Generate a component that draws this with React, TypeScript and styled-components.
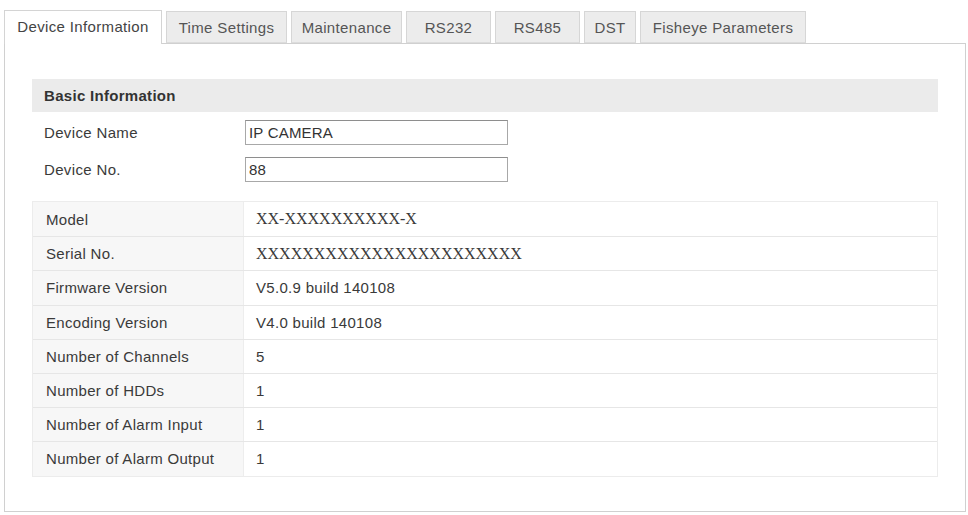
import React from "react";
import styled, { createGlobalStyle } from "styled-components";

const GlobalStyle = createGlobalStyle`
  html, body { margin: 0; padding: 0; background: #ffffff; }
  body { font-family: "Liberation Sans", Arial, sans-serif; color: #333; }
`;

const Page = styled.div`
  width: 968px;
  height: 515px;
  box-sizing: border-box;
  padding: 10px 3px 3px 4px;
  display: flex;
  flex-direction: column;
`;

const TabBar = styled.div`
  display: flex;
  align-items: flex-end;
  gap: 4px;
  height: 33px;
  position: relative;
  z-index: 1;
`;

const Tab = styled.div<{ $active?: boolean; $w: number }>`
  box-sizing: border-box;
  width: ${(p) => p.$w}px;
  height: ${(p) => (p.$active ? 34 : 32)}px;
  margin-bottom: ${(p) => (p.$active ? -1 : 0)}px;
  border: 1px solid ${(p) => (p.$active ? "#d4d4d4" : "#d6d6d6")};
  border-bottom: ${(p) => (p.$active ? "none" : "1px solid #dcdcdc")};
  background: ${(p) => (p.$active ? "#ffffff" : "#ececec")};
  color: ${(p) => (p.$active ? "#444" : "#555")};
  font-size: 15px;
  letter-spacing: 0.35px;
  display: flex;
  align-items: center;
  justify-content: center;
  padding-bottom: ${(p) => (p.$active ? 2 : 0)}px;
  white-space: nowrap;
`;

const Panel = styled.div`
  box-sizing: border-box;
  width: 962px;
  height: 469px;
  border: 1px solid #d0d0d0;
  padding: 35px 27px 0 27px;
  display: flex;
  flex-direction: column;
`;

const SectionHeader = styled.div`
  height: 33px;
  margin-bottom: 2px;
  background: #ebebeb;
  display: flex;
  align-items: center;
  padding-left: 12px;
  font-weight: bold;
  font-size: 15px;
  letter-spacing: 0.3px;
  color: #333;
`;

const FormRow = styled.div`
  height: 37px;
  display: grid;
  grid-template-columns: 201px 263px;
  align-items: center;
  padding-left: 12px;
`;

const FormLabel = styled.span`
  font-size: 15px;
  letter-spacing: 0.35px;
  color: #3a3a3a;
`;

const TextInput = styled.input`
  box-sizing: border-box;
  width: 263px;
  height: 25px;
  border: 1px solid #a8a8a8;
  border-top-color: #8e8e8e;
  padding: 0 3px;
  font-family: "Liberation Sans", Arial, sans-serif;
  font-size: 15px;
  letter-spacing: 0.2px;
  color: #333;
  background: #fff;
  outline: none;
`;

const InfoTable = styled.div`
  margin-top: 13px;
  border: 1px solid #ececec;
  display: flex;
  flex-direction: column;
`;

const InfoRow = styled.div`
  box-sizing: border-box;
  display: grid;
  grid-template-columns: 211px 1fr;
  height: 34.2px;
  & + & {
    border-top: 1px solid #e6e6e6;
  }
`;

const InfoLabel = styled.div`
  background: #f7f7f7;
  border-right: 1px solid #ededed;
  display: flex;
  align-items: center;
  padding-left: 13px;
  font-size: 15px;
  letter-spacing: 0.3px;
  color: #3a3a3a;
`;

const InfoValue = styled.div<{ $serif?: boolean }>`
  display: flex;
  align-items: center;
  padding-left: 12px;
  font-family: ${(p) =>
    p.$serif ? '"Liberation Serif", "Times New Roman", serif' : '"Liberation Sans", Arial, sans-serif'};
  font-size: ${(p) => (p.$serif ? 16 : 15)}px;
  letter-spacing: ${(p) => (p.$serif ? 0 : 0.3)}px;
  color: #3a3a3a;
`;

const tabs = [
  { label: "Device Information", w: 158, active: true },
  { label: "Time Settings", w: 121 },
  { label: "Maintenance", w: 111 },
  { label: "RS232", w: 85 },
  { label: "RS485", w: 85 },
  { label: "DST", w: 52 },
  { label: "Fisheye Parameters", w: 166 },
];

const info: { label: string; value: string; serif?: boolean }[] = [
  { label: "Model", value: "XX-XXXXXXXXXX-X", serif: true },
  { label: "Serial No.", value: "XXXXXXXXXXXXXXXXXXXXXXX", serif: true },
  { label: "Firmware Version", value: "V5.0.9 build 140108" },
  { label: "Encoding Version", value: "V4.0 build 140108" },
  { label: "Number of Channels", value: "5" },
  { label: "Number of HDDs", value: "1" },
  { label: "Number of Alarm Input", value: "1" },
  { label: "Number of Alarm Output", value: "1" },
];

export default function App() {
  return (
    <>
      <GlobalStyle />
      <Page>
        <TabBar>
          {tabs.map((t) => (
            <Tab key={t.label} $active={t.active} $w={t.w}>
              {t.label}
            </Tab>
          ))}
        </TabBar>
        <Panel>
          <SectionHeader>Basic Information</SectionHeader>
          <FormRow>
            <FormLabel>Device Name</FormLabel>
            <TextInput defaultValue="IP CAMERA" />
          </FormRow>
          <FormRow>
            <FormLabel>Device No.</FormLabel>
            <TextInput defaultValue="88" />
          </FormRow>
          <InfoTable>
            {info.map((r) => (
              <InfoRow key={r.label}>
                <InfoLabel>{r.label}</InfoLabel>
                <InfoValue $serif={r.serif}>{r.value}</InfoValue>
              </InfoRow>
            ))}
          </InfoTable>
        </Panel>
      </Page>
    </>
  );
}
